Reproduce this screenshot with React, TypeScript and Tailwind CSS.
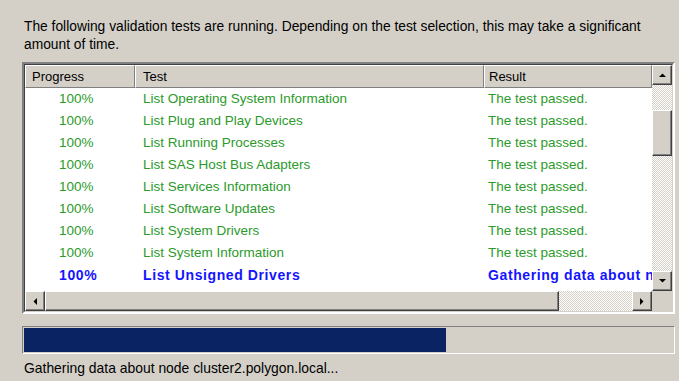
import React from "react";

interface TestRow {
  progress: string;
  name: string;
  result: string;
  state: "done" | "running" | "pending";
}

const ROWS: TestRow[] = [
  { progress: "100%", name: "List Operating System Information", result: "The test passed.", state: "done" },
  { progress: "100%", name: "List Plug and Play Devices", result: "The test passed.", state: "done" },
  { progress: "100%", name: "List Running Processes", result: "The test passed.", state: "done" },
  { progress: "100%", name: "List SAS Host Bus Adapters", result: "The test passed.", state: "done" },
  { progress: "100%", name: "List Services Information", result: "The test passed.", state: "done" },
  { progress: "100%", name: "List Software Updates", result: "The test passed.", state: "done" },
  { progress: "100%", name: "List System Drivers", result: "The test passed.", state: "done" },
  { progress: "100%", name: "List System Information", result: "The test passed.", state: "done" },
  { progress: "100%", name: "List Unsigned Drivers", result: "Gathering data about node cluster2.polygon.local", state: "running" },
  { progress: "", name: "List Network Binding Order", result: "Pending", state: "pending" },
];

const rowColor = {
  done: "text-[#2b9a2b] text-[13.5px]",
  running: "text-[#1414ff] font-bold text-[14px] tracking-[0.6px]",
  pending: "text-black text-[13.5px]",
};

// raised 3d button, windows classic
const raised =
  "bg-[#d4d0c8] border border-t-white border-l-white border-r-[#404040] border-b-[#404040] shadow-[inset_-1px_-1px_#808080]";

const dither =
  "bg-[repeating-conic-gradient(#ffffff_0_25%,#d4d0c8_0_50%)] bg-[length:2px_2px]";

function Arrow({ dir }: { dir: "up" | "down" | "left" | "right" }) {
  const pts = {
    up: "0,4 7,4 3.5,0.5",
    down: "0,0 7,0 3.5,3.5",
    left: "4,0 4,7 0.5,3.5",
    right: "0,0 0,7 3.5,3.5",
  }[dir];
  const vertical = dir === "up" || dir === "down";
  return (
    <svg width={vertical ? 7 : 4} height={vertical ? 4 : 7} viewBox={vertical ? "0 0 7 4" : "0 0 4 7"}>
      <polygon points={pts} fill="#000" />
    </svg>
  );
}

function HeaderCell({ label, className }: { label: string; className: string }) {
  return (
    <div
      className={`h-[23px] flex items-center border-t border-l border-t-white border-l-white border-r border-b border-r-[#808080] border-b-[#808080] ${className}`}
    >
      {label}
    </div>
  );
}

export default function App() {
  return (
    <div
      className="w-[679px] h-[381px] bg-[#d4d0c8] overflow-hidden text-[13px] text-black"
      style={{ fontFamily: '"Liberation Sans", Arial, sans-serif' }}
    >
      <p className="pl-[24px] pr-[20px] pt-[18px] leading-[18px] text-[13.8px]">
        The following validation tests are running. Depending on the test selection, this may take a significant
        amount of time.
      </p>

      {/* list view */}
      <div className="ml-[22px] mt-[8px] w-[653px] h-[252px] border-2 border-t-[#808080] border-l-[#808080] border-r-white border-b-white">
        <div className="w-full h-full border border-t-[#404040] border-l-[#404040] border-r-[#d4d0c8] border-b-[#d4d0c8] flex flex-col bg-white">
          <div className="flex flex-1 min-h-0">
            <div className="flex-1 flex flex-col min-w-0">
              <div className="grid grid-cols-[110px_349px_1fr] bg-[#d4d0c8]">
                <HeaderCell label="Progress" className="pl-[6px]" />
                <HeaderCell label="Test" className="pl-[7px]" />
                <HeaderCell label="Result" className="pl-[4px]" />
              </div>
              <div className="flex-1 overflow-hidden">
                {ROWS.map((r) => (
                  <div
                    key={r.name}
                    className={`grid grid-cols-[110px_349px_1fr] h-[22px] items-center whitespace-nowrap ${rowColor[r.state]}`}
                  >
                    <span className="pl-[34px]">{r.progress}</span>
                    <span className="pl-[8px] overflow-hidden">{r.name}</span>
                    <span className="pl-[4px] overflow-hidden">{r.result}</span>
                  </div>
                ))}
              </div>
            </div>

            {/* vertical scrollbar */}
            <div className="w-[20px] flex flex-col">
              <div className={`h-[20px] flex items-center justify-center ${raised}`}>
                <Arrow dir="up" />
              </div>
              <div className={`flex-1 flex flex-col ${dither}`}>
                <div className="h-[25px]" />
                <div className={`h-[46px] ${raised}`} />
              </div>
              <div className={`h-[20px] flex items-center justify-center ${raised}`}>
                <Arrow dir="down" />
              </div>
            </div>
          </div>

          {/* horizontal scrollbar */}
          <div className="flex h-[20px]">
            <div className={`w-[20px] flex items-center justify-center ${raised}`}>
              <Arrow dir="left" />
            </div>
            <div className={`flex-1 flex ${dither}`}>
              <div className={`w-[514px] ${raised}`} />
            </div>
            <div className={`w-[20px] flex items-center justify-center ${raised}`}>
              <Arrow dir="right" />
            </div>
            <div className="w-[20px] bg-[#d4d0c8]" />
          </div>
        </div>
      </div>

      {/* progress bar */}
      <div className="ml-[22px] mt-[12px] w-[653px] h-[28px] border border-t-[#808080] border-l-[#808080] border-r-white border-b-white p-[1px]">
        <div className="h-full w-[422px] bg-[#0a2463]" />
      </div>

      <p className="pl-[24px] mt-[5px] leading-[18px] text-[13.9px]">
        Gathering data about node cluster2.polygon.local...
      </p>
    </div>
  );
}
